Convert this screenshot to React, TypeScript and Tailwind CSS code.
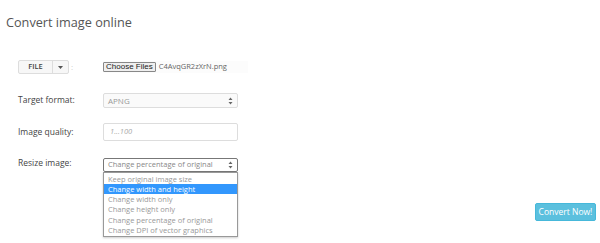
import React from "react";

const options = [
  "Keep original image size",
  "Change width and height",
  "Change width only",
  "Change height only",
  "Change percentage of original",
  "Change DPI of vector graphics",
];

const Arrows = () => (
  <svg width="5" height="8" viewBox="0 0 5 8" className="text-[#666]">
    <path d="M2.5 0.5 L4.5 3 H0.5 Z M2.5 7.5 L4.5 5 H0.5 Z" fill="currentColor" />
  </svg>
);

export default function App() {
  return (
    <div className="w-[600px] h-[243px] bg-white text-[#444] font-['Open_Sans',sans-serif] overflow-hidden">
      <h1 className="pl-[6px] pt-[13px] text-[12.7px] leading-[18px] text-[#555]">Convert image online</h1>

      <div className="pl-[18px] pr-[4px]">
        {/* file row */}
        <div className="flex items-center mt-[29px] h-[14px]">
          <div className="w-[85px] flex items-center">
            <div className="flex h-[14px] border border-[#ddd] rounded-[2px] bg-[#f7f7f7] text-[7.5px] font-semibold text-[#444]">
              <span className="w-[34px] flex items-center justify-center border-r border-[#ddd]">FILE</span>
              <span className="w-[15px] flex items-center justify-center">
                <svg width="5" height="3" viewBox="0 0 5 3"><path d="M0 0 H5 L2.5 3 Z" fill="#555" /></svg>
              </span>
            </div>
            <span className="ml-[2px] text-[8px] text-[#ccc]">:</span>
          </div>
          <div className="flex items-center w-[145px] bg-[#fcfcfc]">
            <span className="h-[10px] px-[2px] flex items-center border border-[#888] bg-[#efefef] rounded-[1px] text-[8px] font-['Liberation_Sans',sans-serif] text-[#222]">Choose Files</span>
            <span className="ml-[3px] text-[7.5px] text-[#666]">C4AvqGR2zXrN.png</span>
          </div>
        </div>

        {/* target format */}
        <div className="flex items-center mt-[19px] h-[15px]">
          <label className="w-[85px] text-[8.5px]">Target format:</label>
          <div className="w-[135px] h-[15px] border border-[#ddd] rounded-[2px] bg-[#fafafa] flex items-center justify-between px-[4px] text-[8px] text-[#999]">
            <span>APNG</span>
            <Arrows />
          </div>
        </div>

        {/* quality */}
        <div className="flex items-center mt-[15px] h-[18px]">
          <label className="w-[85px] text-[8.5px]">Image quality:</label>
          <div className="w-[135px] h-[18px] border border-[#ddd] rounded-[2px] bg-white flex items-center px-[6px] text-[7.5px] italic text-[#aaa]">
            1...100
          </div>
        </div>

        {/* resize */}
        <div className="flex items-start mt-[17px] h-[14px]">
          <label className="w-[85px] text-[8.5px] leading-[14px] -mt-[2px]">Resize image:</label>
          <div className="relative w-[135px]">
            <div className="h-[14px] border border-[#777] rounded-[2px] bg-white flex items-center justify-between px-[4px] text-[7.5px] text-[#888]">
              <span>Change percentage of original</span>
              <Arrows />
            </div>
            <ul className="absolute left-0 top-[14px] w-[135px] border border-[#999] bg-white shadow-[0_1px_2px_rgba(0,0,0,0.2)] text-[7.5px] text-[#999] leading-[10.3px] py-[0.5px]">
              {options.map((o, i) => (
                <li key={o} className={`px-[4px] ${i === 1 ? "bg-[#3297fd] text-white" : ""}`}>{o}</li>
              ))}
            </ul>
          </div>
        </div>

        <div className="flex justify-end mt-[31px]">
          <button className="w-[61px] h-[18px] rounded-[2px] bg-[#5bc0de] border border-[#46b8da] text-white text-[8.5px]">Convert Now!</button>
        </div>
      </div>
    </div>
  );
}
